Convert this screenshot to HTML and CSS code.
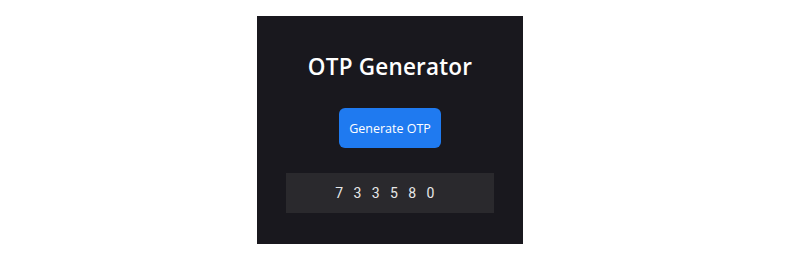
FILE: index.html
```html
<!DOCTYPE html>
<html lang="en">
<head>
<meta charset="utf-8">
<title>OTP Generator</title>
<link rel="stylesheet" href="styles.css">
</head>
<body>
  <div class="card">
    <h1 class="title">OTP Generator</h1>
    <button class="btn">Generate OTP</button>
    <div class="otp">733580</div>
  </div>
</body>
</html>
```

FILE: styles.css
```css
html, body {
  margin: 0;
  padding: 0;
  background: #ffffff;
}
body {
  padding: 16px 0 0 257px;
}
.card {
  width: 266px;
  height: 228px;
  box-sizing: border-box;
  background: #19181e;
  display: flex;
  flex-direction: column;
  align-items: center;
  padding-top: 37px;
}
.title {
  margin: 0;
  font-family: "Open Sans", sans-serif;
  font-weight: 600;
  font-size: 22.5px;
  line-height: 28px;
  color: #ffffff;
  letter-spacing: 0.2px;
}
.btn {
  margin-top: 27px;
  width: 102px;
  height: 40px;
  border: none;
  border-radius: 6px;
  background: #1f7af0;
  color: #ffffff;
  font-family: "Open Sans", sans-serif;
  font-size: 12.5px;
  font-weight: 400;
  padding: 0;
}
.otp {
  margin-top: 25px;
  width: 208px;
  height: 40px;
  background: #2a292d;
  color: #e8e8e8;
  font-family: Roboto, sans-serif;
  font-size: 14px;
  font-weight: 400;
  letter-spacing: 10.4px;
  display: flex;
  align-items: center;
  justify-content: center;
}
```
